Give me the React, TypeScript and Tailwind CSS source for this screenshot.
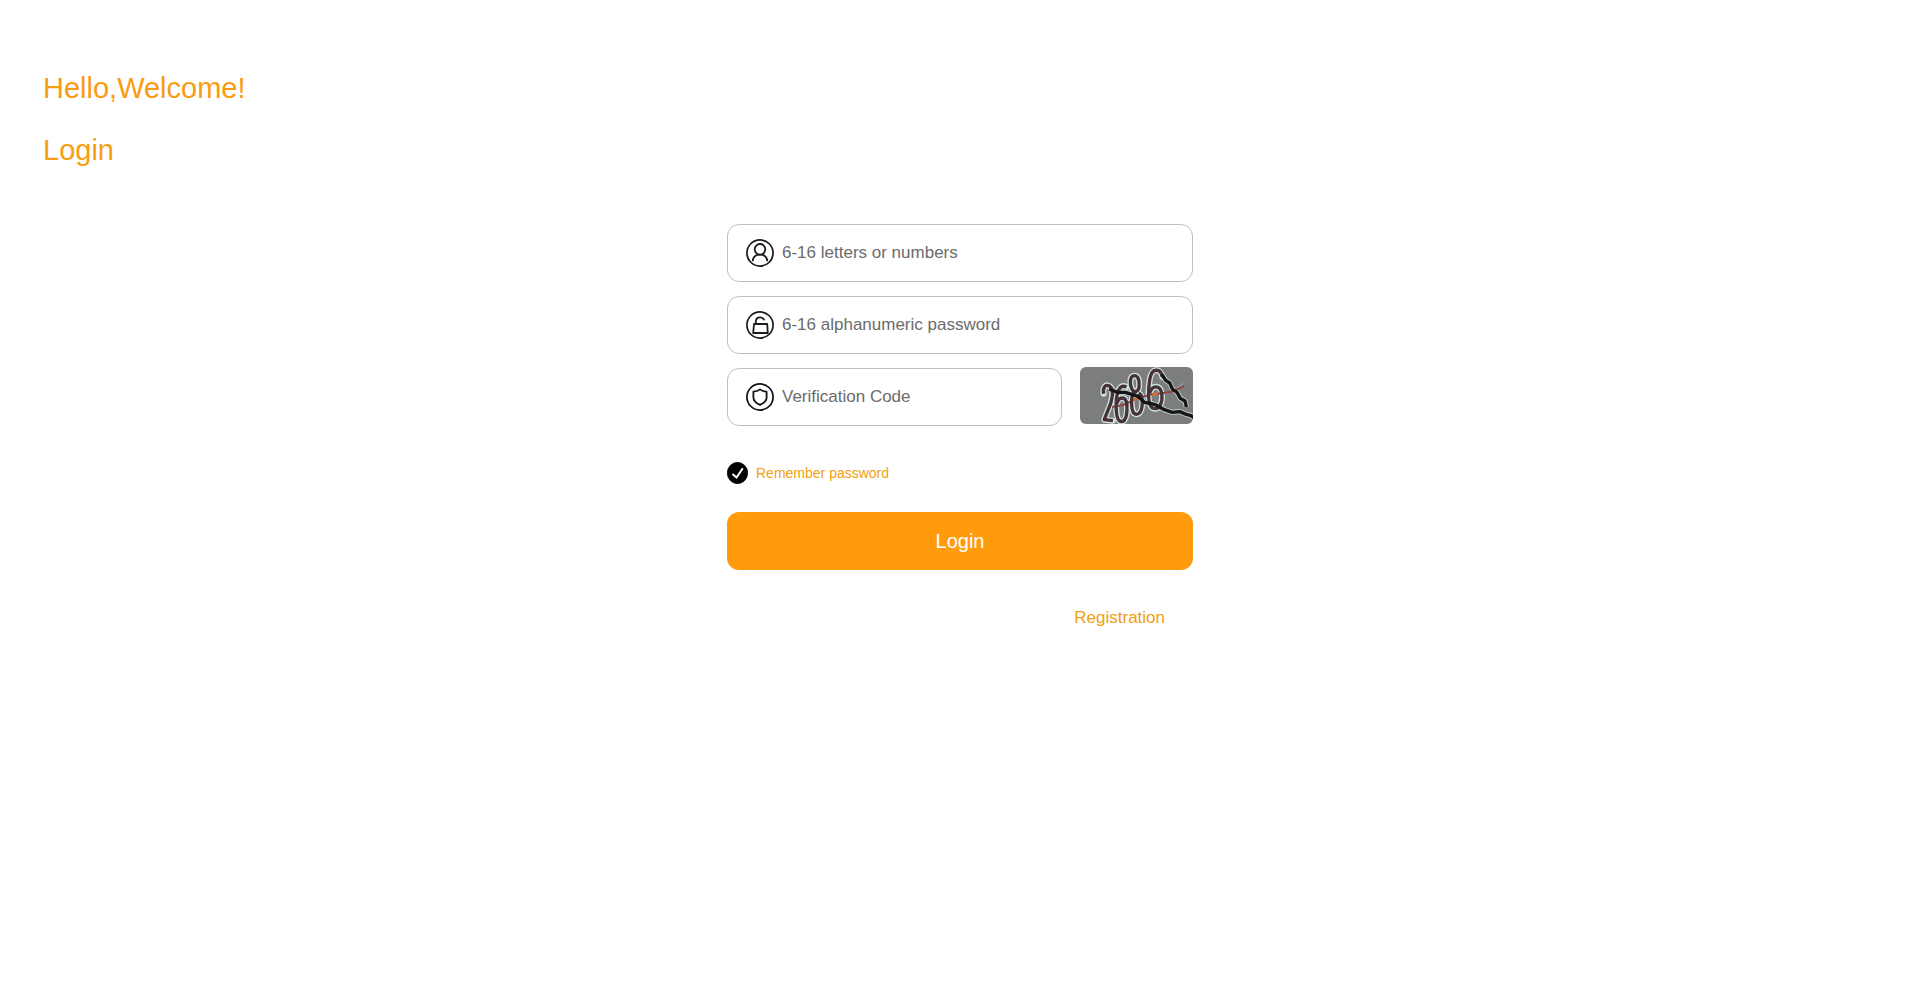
import { useState } from 'react';
import type { FormEvent, ReactNode } from 'react';

interface FieldProps {
  id: string;
  label: string;
  type?: string;
  icon: ReactNode;
  value: string;
  onChange: (value: string) => void;
}

function UserIcon() {
  return (
    <svg viewBox="0 0 28 28" className="h-7 w-7 shrink-0" fill="none" stroke="#1c1c1c" aria-hidden="true">
      <circle cx="14" cy="14" r="13.1" strokeWidth="1.7" />
      <circle cx="14" cy="10.3" r="5.3" strokeWidth="1.8" />
      <path d="M6.700 22.300C7 18 10 15.600 14 15.600s7 2.400 7.300 6.700" strokeWidth="1.8" />
    </svg>
  );
}

function LockIcon() {
  return (
    <svg viewBox="0 0 28 28" className="h-7 w-7 shrink-0" fill="none" stroke="#1c1c1c" aria-hidden="true">
      <circle cx="14" cy="14" r="13.1" strokeWidth="1.7" />
      <path d="M8 13h13.200l.6 9H7.200z" strokeWidth="1.8" strokeLinejoin="round" />
      <path d="M9.800 13v-2.200c0-2.700 1.700-4.500 4.300-4.500 2.100 0 3.600 1 4.100 3" strokeWidth="1.8" />
    </svg>
  );
}

function ShieldIcon() {
  return (
    <svg viewBox="0 0 28 28" className="h-7 w-7 shrink-0" fill="none" stroke="#111" aria-hidden="true">
      <circle cx="14" cy="14" r="13.1" strokeWidth="1.7" />
      <path
        d="M14 6.400c1.900 1.500 4 2.200 6.600 2.300v5.700c0 3.500-2.500 5.600-6.600 7.500-4.100-1.900-6.600-4-6.600-7.500V8.700c2.600-.1 4.700-.8 6.600-2.300z"
        strokeWidth="1.8"
        strokeLinejoin="round"
      />
    </svg>
  );
}

// Digits and noise lines are drawn twice, first as a wide pale halo
const captchaStrokes = [
  'M83 92C80 74 88 64 98 68c16 6 12 34 6 54L85 170l26 3',
  'M152 72c-20-10-30 14-31 48-1 32 3 54 15 56 16 0 19-30 17-52-3-26-24-24-30-2',
  'M176 38c-14 0-16 24-8 40 8 14 22 8 22-12 0-16-4-28-14-28z',
  'M178 88c-16 6-14 64 3 66 22 0 24-54 8-64',
  'M260 42c-6-28-32-28-38 6-6 36-6 78 8 87 18 8 32-14 28-42-4-28-28-28-36-4',
];

const captchaNoise = [
  'M258 34l12 18 12 8 8 18 14 10 10 18 14 8 4 18',
  'M100 78l24 10 24 0 20 6 18 6 20 18 30 6 30 16 24 8 22-2 20 8 14 4 20 15',
];

function Captcha() {
  return (
    <svg viewBox="12 12 340 171" preserveAspectRatio="none" className="block h-full w-full" fill="none" aria-hidden="true">
      <rect x="12" y="12" width="340" height="171" fill="#7c7d7d" />
      <g stroke="#cfe2dc" strokeWidth="18" strokeLinejoin="round" strokeLinecap="round">
        {captchaStrokes.map(d => <path key={d} d={d} />)}
      </g>
      <g stroke="#b9cbc5" strokeWidth="16" strokeLinejoin="round">
        {captchaNoise.map(d => <path key={d} d={d} />)}
      </g>
      <path d="M264 92l28-8 32-22" stroke="#91a9bb" strokeWidth="5" />
      <path d="M108 132l34-6 34-16 50-16 34-3 34-6 32-18" stroke="#91443f" strokeWidth="6" />
      <path d="M170 112l14-5M230 95l16-3" stroke="#df6c32" strokeWidth="8" />
      <g stroke="#46303a" strokeWidth="10" strokeLinejoin="round">
        {captchaStrokes.map(d => <path key={d} d={d} />)}
      </g>
      <g stroke="#171416" strokeWidth="10" strokeLinejoin="round">
        {captchaNoise.map(d => <path key={d} d={d} />)}
      </g>
    </svg>
  );
}

function Field({ id, label, type = 'text', icon, value, onChange }: FieldProps) {
  return (
    <label
      htmlFor={id}
      className="flex h-[58px] min-w-0 flex-1 items-center gap-2 rounded-xl border border-[#bfbfbf] px-[18px]"
    >
      {icon}
      <input
        id={id}
        type={type}
        aria-label={label}
        placeholder={label}
        value={value}
        onChange={e => onChange(e.target.value)}
        className="w-full min-w-0 bg-transparent text-[17px] leading-7 text-gray-800 outline-none placeholder:text-[#6b6b6b]"
      />
    </label>
  );
}

export default function App() {
  const [username, setUsername] = useState('');
  const [password, setPassword] = useState('');
  const [code, setCode] = useState('');
  const [remember, setRemember] = useState(true);

  const handleSubmit = (e: FormEvent) => {
    e.preventDefault();
  };

  return (
    <div className="min-h-screen bg-white font-['Liberation_Sans',Arial,sans-serif]">
      <header className="space-y-[22px] px-[43px] pt-[68px] text-[29px] leading-10 text-[#f99c12]">
        <h1>Hello,Welcome!</h1>
        <h2>Login</h2>
      </header>

      <main className="mx-auto mt-[54px] w-full max-w-[466px]">
        <form onSubmit={handleSubmit}>
          <div className="flex flex-col gap-[14px]">
            <div className="flex">
              <Field
                id="username"
                label="6-16 letters or numbers"
                icon={<UserIcon />}
                value={username}
                onChange={setUsername}
              />
            </div>
            <div className="flex">
              <Field
                id="password"
                label="6-16 alphanumeric password"
                type="password"
                icon={<LockIcon />}
                value={password}
                onChange={setPassword}
              />
            </div>
            <div className="flex items-start gap-[18px]">
              <Field id="code" label="Verification Code" icon={<ShieldIcon />} value={code} onChange={setCode} />
              <button
                type="button"
                aria-label="Refresh verification code"
                className="-mt-px h-[57px] w-[113px] shrink-0 overflow-hidden rounded-md"
              >
                <Captcha />
              </button>
            </div>
          </div>

          <label htmlFor="remember" className="mt-9 flex w-fit items-center gap-2 text-sm text-[#f0a010]">
            <span className="grid h-[22px] w-[21px]">
              <input
                id="remember"
                type="checkbox"
                checked={remember}
                onChange={e => setRemember(e.target.checked)}
                className="peer col-start-1 row-start-1 h-full w-full appearance-none rounded-full border border-black checked:bg-black"
              />
              <svg
                viewBox="0 0 21 22"
                className="pointer-events-none invisible col-start-1 row-start-1 h-full w-full peer-checked:visible"
                fill="none"
                stroke="#fff"
                strokeWidth="2"
                aria-hidden="true"
              >
                <path d="M5.500 12l4 3.500L15.800 6.200" />
              </svg>
            </span>
            Remember password
          </label>

          <button type="submit" className="mt-7 h-[58px] w-full rounded-xl bg-[#ff9b0d] text-xl text-white">
            Login
          </button>
        </form>

        <div className="mt-9 flex justify-end px-7">
          <a href="#registration" className="text-[17px] leading-6 text-[#f0a010]">
            Registration
          </a>
        </div>
      </main>
    </div>
  );
}
